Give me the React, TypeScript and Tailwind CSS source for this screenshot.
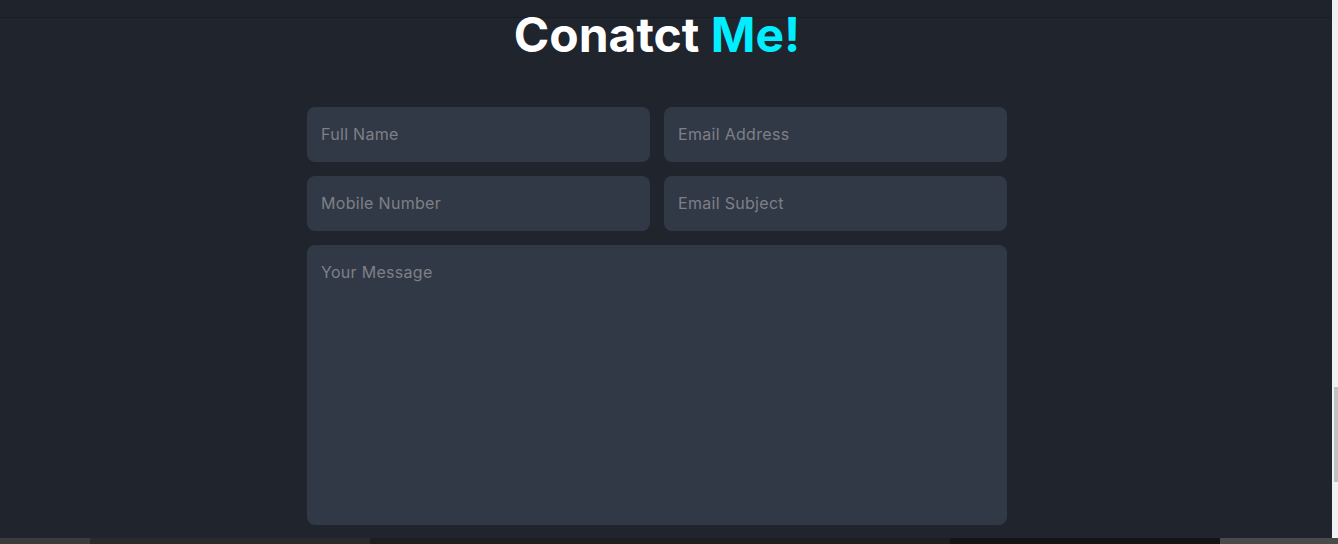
export default function App() {
  return (
    <div className="flex h-[544px] w-[1338px] flex-col overflow-hidden bg-[#1f242d] font-['Inter','Noto_Sans',sans-serif]">
      <div className="flex min-h-0 flex-1">
        {/* Page */}
        <div className="flex flex-1 flex-col">
          <div className="h-[18px] shrink-0 border-b border-[#191c22] bg-[#1f232b]" />
          <section className="flex flex-1 flex-col items-center pr-[18px]">
            <h2 className="mt-[-12px] text-[48px] font-bold leading-[58px] text-white">
              Conatct <span className="text-[#00eeff]">Me!</span>
            </h2>
            <form className="mt-[43px] flex w-[700px] flex-col gap-[14px]">
              <div className="grid grid-cols-2 gap-[14px]">
                <input
                  placeholder="Full Name"
                  className="h-[55px] rounded-lg bg-[#323946] px-[14px] pb-[2px] text-base tracking-[0.3px] text-white outline-none placeholder:text-[#7d8088]"
                />
                <input
                  placeholder="Email Address"
                  className="h-[55px] rounded-lg bg-[#323946] px-[14px] pb-[2px] text-base tracking-[0.3px] text-white outline-none placeholder:text-[#7d8088]"
                />
                <input
                  placeholder="Mobile Number"
                  className="h-[55px] rounded-lg bg-[#323946] px-[14px] pb-[2px] text-base tracking-[0.3px] text-white outline-none placeholder:text-[#7d8088]"
                />
                <input
                  placeholder="Email Subject"
                  className="h-[55px] rounded-lg bg-[#323946] px-[14px] pb-[2px] text-base tracking-[0.3px] text-white outline-none placeholder:text-[#7d8088]"
                />
              </div>
              <textarea
                placeholder="Your Message"
                className="h-[280px] resize-none rounded-lg bg-[#323946] px-[14px] pt-[15px] text-base tracking-[0.3px] text-white outline-none placeholder:text-[#7d8088]"
              />
            </form>
          </section>
        </div>
        {/* Scrollbar */}
        <div className="flex w-[6px] flex-col bg-[#f1f1f1] pt-[387px]">
          <div className="ml-[2px] h-[95px] bg-[#c1c1c1]" />
        </div>
      </div>
      {/* Taskbar strip */}
      <div className="flex h-[6px] shrink-0 bg-[#3c3c3c]">
        <div className="w-[90px]" />
        <div className="w-[280px] bg-[#2a2a2a]" />
        <div className="w-[580px] bg-[#1e1e1e]" />
        <div className="w-[270px] bg-[#141414]" />
        <div className="flex-1 bg-[#4a4a4a]" />
      </div>
    </div>
  );
}
